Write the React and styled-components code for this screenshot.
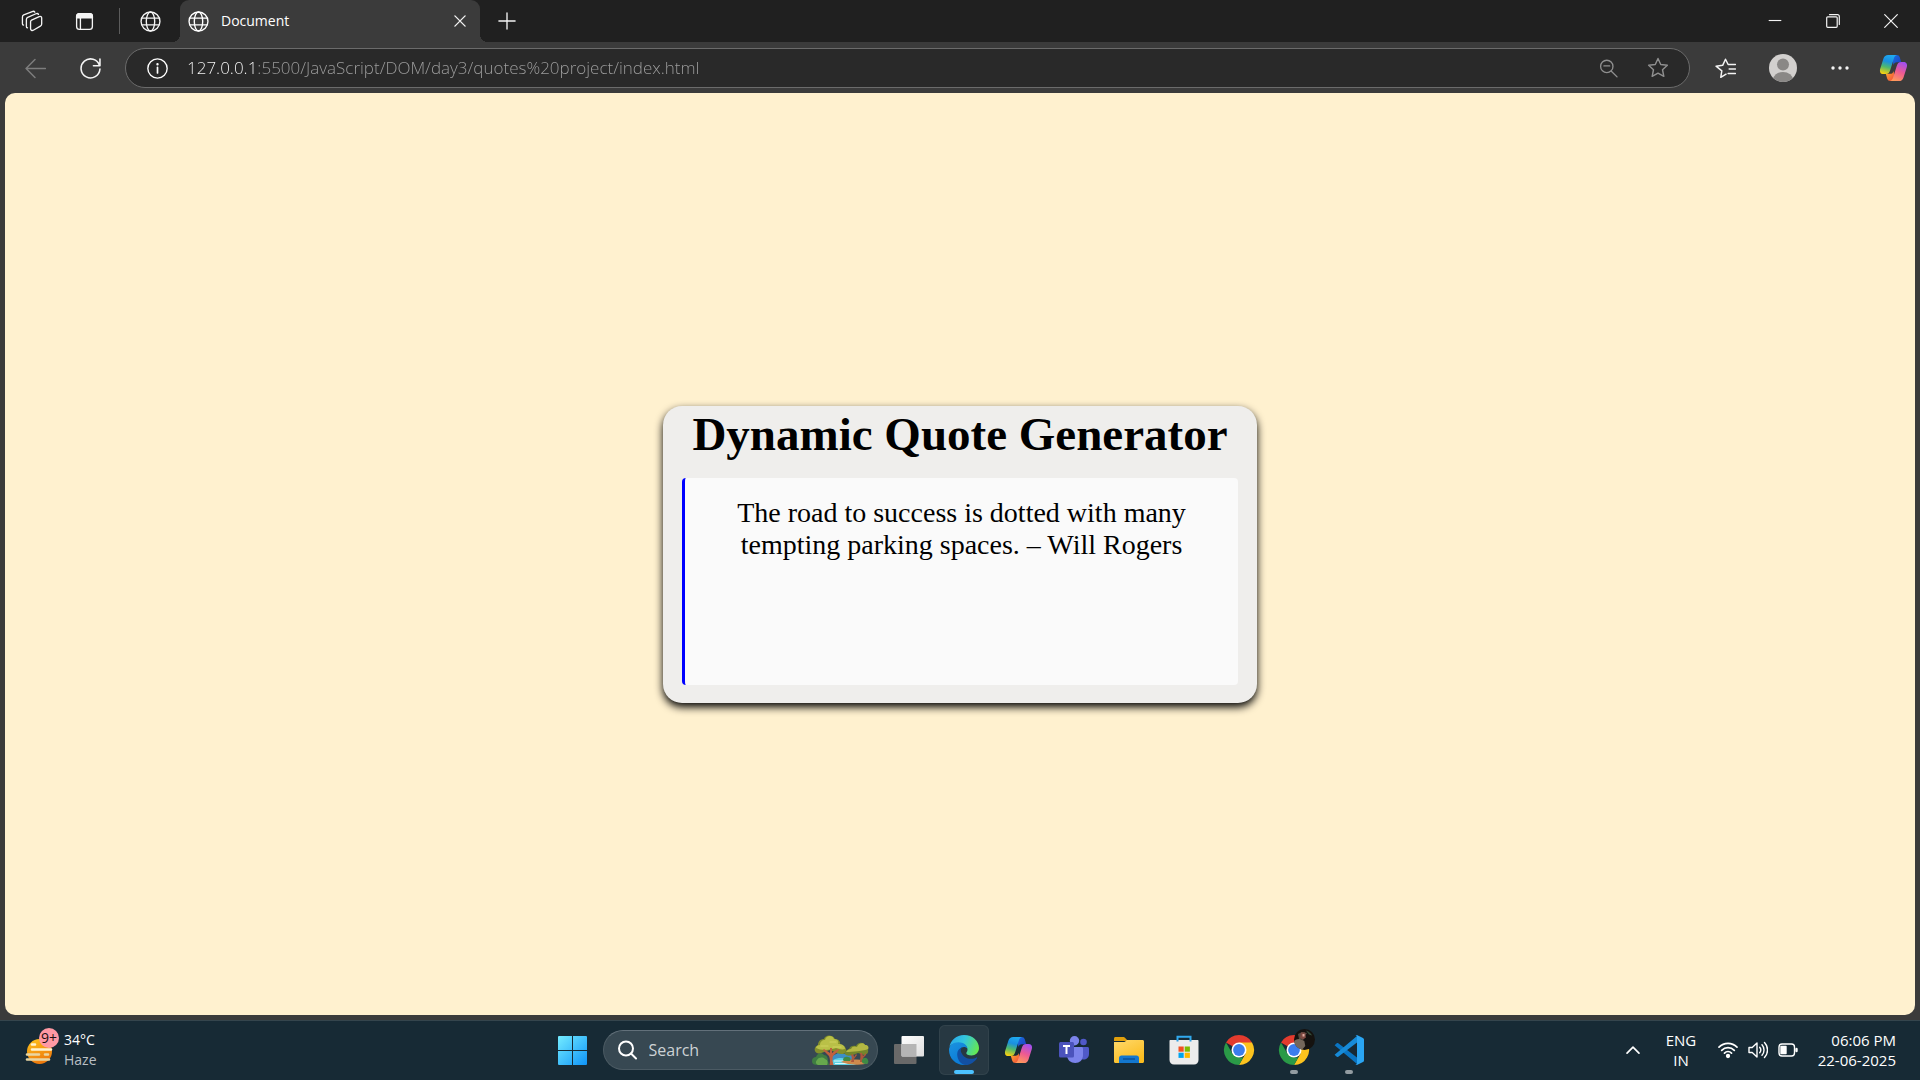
import React from "react";
import styled, { createGlobalStyle } from "styled-components";

const ui = `"Open Sans", "Noto Sans", sans-serif`;
const serif = `"Liberation Serif", "Times New Roman", serif`;

const GlobalStyle = createGlobalStyle`
  * { box-sizing: border-box; }
  body { margin: 0; background: #3b3b3b; }
  button, input { font: inherit; color: inherit; border: 0; background: none; padding: 0; margin: 0; outline: none; }
  svg { display: block; flex: none; }
`;

const Screen = styled.div`
  min-height: 100vh;
  display: flex;
  flex-direction: column;
  background: #3b3b3b;
  color: #fff;
  font-family: ${ui};
  font-size: 14px;
`;

const TabStrip = styled.header`
  display: flex;
  align-items: stretch;
  height: 42px;
  padding-left: 6px;
  background: #202020;
`;

const BarButton = styled.button`
  display: flex;
  align-items: center;
  justify-content: center;
  width: ${(p) => p.$width || 52}px;
  flex: none;
  color: ${(p) => p.$tone || "#f4f4f4"};
`;

const Divider = styled.span`
  width: 1px;
  height: 26px;
  margin: 8px 0 8px 9px;
  background: #5c5c5c;
`;

const Tab = styled.div`
  position: relative;
  display: flex;
  align-items: center;
  gap: 12px;
  width: 300px;
  padding-left: 8px;
  border-radius: 9px 9px 0 0;
  background: #3b3b3b;

  &::before,
  &::after {
    content: "";
    position: absolute;
    bottom: 0;
    width: 8px;
    height: 8px;
  }
  &::before {
    left: -8px;
    background: radial-gradient(circle at 0 0, transparent 8px, #3b3b3b 8px);
  }
  &::after {
    right: -8px;
    background: radial-gradient(circle at 100% 0, transparent 8px, #3b3b3b 8px);
  }
`;

const TabTitle = styled.span`
  flex: 1;
  line-height: 20px;
`;

const Spacer = styled.span`
  flex: 1;
`;

const Toolbar = styled.nav`
  display: flex;
  align-items: stretch;
  height: 51px;
  padding: 6px 2px 5px 8px;
`;

const AddressBar = styled.div`
  flex: 1;
  display: flex;
  align-items: center;
  margin: 0 7px;
  padding: 0 6px 0 21px;
  border: 1px solid #6b6b6b;
  border-radius: 20px;
  background: #292929;
`;

const AddressInput = styled.input`
  flex: 1;
  min-width: 0;
  height: 32px;
  margin-left: 19px;
  padding-bottom: 2px;
  font-size: 17px;
  font-weight: 350;
  background: linear-gradient(to right, #fff 67px, #a0a0a0 67px);
  background-clip: text;
  -webkit-background-clip: text;
  -webkit-text-fill-color: transparent;
`;

const Page = styled.main`
  flex: 1;
  display: flex;
  align-items: center;
  justify-content: center;
  margin: 0 5px;
  border-radius: 10px;
  background: #fff1cf;
  color: #000;
  font-family: ${serif};
`;

const Card = styled.section`
  width: 594px;
  padding: 0 19px 18px;
  border-radius: 19px;
  background: #efeeec;
  box-shadow: 0 4px 8px #000;
  text-align: center;
`;

const CardTitle = styled.h1`
  margin: 0 -19px 16px;
  font-size: 47px;
  line-height: 56px;
  font-weight: 700;
`;

const Quote = styled.blockquote`
  min-height: 207px;
  margin: 0;
  padding: 19px 40px;
  border-left: 3px solid #00f;
  border-radius: 4px;
  background: #fafafa;
  font-size: 28px;
  line-height: 32px;
`;

const Taskbar = styled.footer`
  display: grid;
  grid-template-columns: 1fr auto 1fr;
  height: 60px;
  margin-top: 5px;
  padding: 4px 0 5px;
  border-top: 1px solid #35454d;
  background: #172a35;
  font-size: 15px;
`;

const Weather = styled.button`
  display: flex;
  align-items: center;
  gap: 10px;
  justify-self: start;
  padding-left: 24px;
  font-size: 14px;
  text-align: left;
`;

const WeatherText = styled.span`
  display: flex;
  flex-direction: column;
  line-height: 20px;
`;

const Muted = styled.span`
  color: #b9bfc3;
`;

const Apps = styled.div`
  display: flex;
  gap: 5px;
  padding-left: 1px;
`;

const AppButton = styled.button`
  position: relative;
  display: flex;
  align-items: center;
  justify-content: center;
  width: 50px;
  height: 50px;
  border-radius: 6px;
  background: ${(p) => (p.$active ? "#273842" : "transparent")};
  box-shadow: ${(p) => (p.$active ? "inset 0 0 0 1px #31424b" : "none")};

  &::after {
    content: "";
    display: ${(p) => (p.$active || p.$open ? "block" : "none")};
    position: absolute;
    bottom: 1px;
    width: ${(p) => (p.$active ? 20 : 8)}px;
    height: 4px;
    border-radius: 2px;
    background: ${(p) => (p.$active ? "#4cc2ff" : "#939ca1")};
  }
`;

const SearchBox = styled.label`
  display: flex;
  align-items: center;
  gap: 12px;
  width: 275px;
  height: 40px;
  margin: 5px 1px 5px 0;
  padding: 0 8px 0 13px;
  border: 1px solid #4b5a63;
  border-top-color: #62707a;
  border-radius: 20px;
  background: #374852;
`;

const SearchInput = styled.input`
  flex: 1;
  min-width: 0;
  font-size: 16px;
  &::placeholder { color: #cdd2d5; opacity: 1; }
`;

const Tray = styled.div`
  display: flex;
  align-items: stretch;
  justify-content: flex-end;
  padding-right: 24px;
`;

const TrayButton = styled.button`
  display: flex;
  align-items: center;
  justify-content: center;
  gap: 10px;
  padding: 0 ${(p) => p.$pad || 9}px;
`;

const TrayText = styled.button`
  width: ${(p) => p.$width}px;
  line-height: 20px;
  text-align: ${(p) => p.$align};
`;

const Line = styled.span`
  display: block;
  white-space: nowrap;
`;

const Stroke = ({ size = 20, width = 1.4, children, ...rest }) => (
  <svg width={size} height={size} viewBox="0 0 20 20" fill="none" stroke="currentColor"
    strokeWidth={width} strokeLinecap="round" strokeLinejoin="round" aria-hidden="true" {...rest}>
    {children}
  </svg>
);

const Globe = () => (
  <Stroke size={21} width={1.3}>
    <circle cx="10" cy="10" r="9" />
    <ellipse cx="10" cy="10" rx="4" ry="9" />
    <path d="M1.8 6.8h16.4M1.8 13.2h16.4" />
  </Stroke>
);

const Workspaces = () => (
  <Stroke size={22} width={1.2}>
    <path d="M9.600 9.200 16.600 6c1.200-.5 2.200 0 2.200 1.300v5.500c0 .9-.4 1.500-1.200 1.900l-6.400 3.700c-1.100.6-2.500 0-2.500-1.300v-6.400c0-.7.300-1.200.9-1.500z" />
    <path d="M5.900 16.300c-.7-.2-1-.7-1-1.400V8.600c0-.9.4-1.500 1.200-1.900L13.600 3.400c1-.4 1.900-.2 2.300.6" />
    <path d="M2.300 13.800c-.7-.2-1-.7-1-1.400V6.400c0-.9.4-1.500 1.200-1.900L10.200 1.400c1-.4 1.900-.2 2.300.5" />
  </Stroke>
);

const TabActions = () => (
  <Stroke size={19}>
    <rect x="1.700" y="1.700" width="16.600" height="16.600" rx="3" />
    <path d="M1.700 6.200V4.500a2.800 2.800 0 0 1 2.800-2.800h11a2.800 2.800 0 0 1 2.800 2.800v1.700z" fill="currentColor" />
    <path d="M5.700 6.500v11.500" />
  </Stroke>
);

const CopilotMark = ({ id }) => (
  <svg width="29" height="26" viewBox="0 0 29 27" aria-hidden="true">
    <defs>
      <linearGradient id={`${id}a`} x1=".6" y1="0" x2=".35" y2="1">
        <stop offset="0" stopColor="#1faaf0" /><stop offset=".35" stopColor="#1a8fe0" />
        <stop offset=".65" stopColor="#4fb96c" /><stop offset="1" stopColor="#f4cf12" />
      </linearGradient>
      <linearGradient id={`${id}b`} x1=".7" y1="0" x2=".3" y2="1">
        <stop offset="0" stopColor="#a24ff0" /><stop offset=".5" stopColor="#ee5a92" />
        <stop offset="1" stopColor="#ff9a5a" />
      </linearGradient>
      <linearGradient id={`${id}c`} x1="0" y1="0" x2="1" y2="1">
        <stop offset="0" stopColor="#1c6fe0" /><stop offset="1" stopColor="#1b3fc0" />
      </linearGradient>
      <linearGradient id={`${id}d`} x1="0" y1="0" x2="1" y2="1">
        <stop offset="0" stopColor="#ffae2e" /><stop offset="1" stopColor="#f0453c" />
      </linearGradient>
    </defs>
    <path d="M13 0h4.500c2 0 3 .8 3.600 2.600L22.500 7.500H18c-2 0-3 1-3.600 3z" fill={`url(#${id}c)`} />
    <path d="M16 27h-4.500c-2 0-3-.8-3.600-2.600L6.500 19.500H11c2 0 3-1 3.600-3z" fill={`url(#${id}d)`} />
    <path d="M9 0h9c-1.700.5-2.600 1.800-3.200 3.800L11.300 15c-1 3.400-2 4.800-5 4.800H4C.8 19.800-.2 17.200.8 14L4 4C4.900 1.200 6.400 0 9 0z" fill={`url(#${id}a)`} />
    <path d="M20 27h-9c1.700-.5 2.600-1.800 3.200-3.800L17.700 12c1-3.400 2-4.800 5-4.800H25c3.200 0 4.200 2.600 3.200 5.800L25 23c-.9 2.800-2.400 4-5 4z" fill={`url(#${id}b)`} />
  </svg>
);

const HazeIcon = () => (
  <svg width="30" height="32" viewBox="0 0 30 32" aria-hidden="true">
    <defs>
      <linearGradient id="sun" x1="0" y1="0" x2=".4" y2="1">
        <stop offset="0" stopColor="#ffc61c" /><stop offset="1" stopColor="#ee7a0c" />
      </linearGradient>
    </defs>
    <circle cx="15.500" cy="17.500" r="12.500" fill="url(#sun)" />
    <g stroke="#fff3cf" strokeWidth="2.600" strokeLinecap="round">
      <path d="M8 10.500h3M8 15.500h13M22 15.500h5" />
      <path d="M3 20.500h12M21 20.500h3M3 25.500h22" stroke="#e9d6a2" />
    </g>
  </svg>
);

const WeatherIcon = styled.span`
  position: relative;
  display: block;
`;

const Badge = styled.span`
  position: absolute;
  left: 15px;
  top: -6px;
  width: 20px;
  height: 20px;
  border-radius: 50%;
  background: #ff99a4;
  color: #1c1012;
  font-size: 14px;
  line-height: 20px;
  text-align: center;
`;

const Windows = () => (
  <svg width="29" height="29" viewBox="0 0 29 29" aria-hidden="true">
    <defs>
      <linearGradient id="win" gradientUnits="userSpaceOnUse" x1="0" y1="0" x2="29" y2="29">
        <stop offset="0" stopColor="#74ecff" /><stop offset="1" stopColor="#0f94f8" />
      </linearGradient>
    </defs>
    <path d="M0 1a1 1 0 0 1 1-1h13v14H0zM15 0h13a1 1 0 0 1 1 1v13H15zM0 15h14v14H1a1 1 0 0 1-1-1zM15 15h14v13a1 1 0 0 1-1 1H15z" fill="url(#win)" />
  </svg>
);

const Grove = () => (
  <svg width="57" height="32" viewBox="0 0 57 32" aria-hidden="true">
    <path d="M20 22l6-3 6 1 4-2 6 4-4 6H20z" fill="#3d8fc4" />
    <path d="M0 27c0-3 2-4 4-4 1-4 6-5 8-2 3 0 4 3 4 6l1 4H6c-4 0-6-1-6-4z" fill="#3f7d42" />
    <path d="M5 26c2-3 6-3 8-1 3 1 3 4 2 6H6c-2-1-3-3-1-5z" fill="#67a84d" />
    <path d="M19 31c0-5 4-7 10-7l9 1-6 2 13 4z" fill="#5fd3e6" />
    <path d="M22 27h11M23 29.500h14" stroke="#d8f8fb" strokeWidth="1.200" />
    <path d="M29 28c6-3 14-3 27-1v2c-4 2-12 2-20 1z" fill="#cf8a4c" />
    <path d="M3 17c-1-3 1-5 3-6 0-4 3-6 6-6 1-4 8-5 11 0 4 0 6 3 5 6 5 0 7 4 6 7-2 3-6 2-9 1l-7-3-6 2c-4 2-8 2-9-1z" fill="#848f2b" />
    <path d="M4 14c0-2 2-3 4-3 0-3 2-5 5-5 1-5 8-5 9-1 4 0 5 3 4 5 5 0 7 2 7 5-3 1-6 0-9-1-5 2-15 3-20 0z" fill="#b9c047" />
    <path d="M9 12h7M18 8h6M21 13h8" stroke="#d0d25e" strokeWidth="1.200" strokeLinecap="round" />
    <path d="M17.500 31c.8-4 .6-6-.5-9l-6-6 1-1 6 4v-5h2v5l6-4 1 1-6 6c-1 3-.6 5 .6 9z" fill="#c0603f" />
    <path d="M33 20c-1-3 2-4 4-5 1-3 4-4 7-3 2-4 7-4 9-1 3 0 4 3 3 5 1 3-2 5-4 5l-6-2-5 2c-4 1-7 1-8-1z" fill="#74862b" />
    <path d="M34 18c1-2 3-3 5-3 1-3 4-3 6-2 1-4 7-5 8-2 3 0 4 2 3 4-4 2-16 3-22 3z" fill="#b4b843" />
    <path d="M39 28c1-3 1-5 0-7l2-1 1 3 2-3 1 1-3 4v3zM48 28c0-4 1-6 0-9h2l1 3 3-3v2l-3 3v4z" fill="#ad573b" />
    <path d="M31 26c0-3 3-4 5-3 3 0 3 3 2 4h-6zM50 26c1-3 5-3 6 0 1 2 0 4-2 4s-5-1-4-4z" fill="#3f8a45" />
  </svg>
);

const TaskView = () => (
  <svg width="30" height="30" viewBox="0 0 30 30" aria-hidden="true">
    <defs>
      <linearGradient id="tv" x1="0" y1="0" x2="1" y2="1">
        <stop offset="0" stopColor="#fff" /><stop offset="1" stopColor="#dedede" />
      </linearGradient>
    </defs>
    <rect x="0" y="9" width="22.500" height="20" rx="1" fill="#696969" />
    <rect x="7.500" y="1" width="22.500" height="20.500" rx="1" fill="url(#tv)" />
    <path d="M7.500 9h15v12.500h-14a1 1 0 0 1-1-1z" fill="#b5b5b5" />
  </svg>
);

const Edge = () => (
  <svg width="30" height="30" viewBox="0 0 30 30" aria-hidden="true">
    <defs>
      <linearGradient id="e1" x1="0" y1=".3" x2="1" y2=".6">
        <stop offset="0" stopColor="#27a8ec" /><stop offset=".45" stopColor="#34c6dc" /><stop offset="1" stopColor="#66e94f" />
      </linearGradient>
      <linearGradient id="e2" x1="0" y1="0" x2=".6" y2="1">
        <stop offset="0" stopColor="#1b93e0" /><stop offset="1" stopColor="#0a7ad6" />
      </linearGradient>
    </defs>
    <path d="M.4 12C1.600 5 7.400 0 15 0c9 0 15 6.400 15 13 0 4.600-3.500 7.400-7.400 7.400-3.600 0-5.300-1.200-5.300-2.200 0-.8 1.200-1.300 1.200-3.600C18.500 11 14.500 8 9.500 8 5 8 1.500 10 .4 12z" fill="url(#e1)" />
    <path d="M0 15c0-4.500 4-7.800 9.500-7.800 5 0 8.500 2.800 9 6.300-1-1-2.200-1.500-3.500-1.500-3.500 0-5.500 3-5.500 6.500 0 5 3.500 9.500 9 10.800-1.100.5-2.300.7-3.500.7C6.700 30 0 23.300 0 15z" fill="url(#e2)" />
    <path d="M13.500 12.200c-1.700 1.200-2.300 3-1 5.800 1.700 3.700 5.300 5.800 9.300 5.800 2.600 0 4.400-.8 5.600-1.400.6-.3 1 .2.600.8C26 26.500 21.500 30 16.800 30 12 29.500 8.200 25 8.200 19.200c0-3.500 2-6.200 5.300-7z" fill="#1250a3" />
  </svg>
);

const Teams = () => (
  <svg width="30" height="28" viewBox="0 0 30 28" aria-hidden="true">
    <circle cx="24.500" cy="6" r="3.300" fill="#5059c9" />
    <path d="M20 11h8.500c.9 0 1.500.6 1.500 1.500V18c0 3.500-2.500 5.500-5.500 5.500S20 21 20 18z" fill="#5059c9" />
    <circle cx="15.500" cy="4.800" r="4.700" fill="#7b83eb" />
    <path d="M9 11h13.500c.9 0 1.500.6 1.500 1.500V19c0 5-3.400 8-7.800 8S8 24 8 19z" fill="#7b83eb" />
    <rect x="0" y="6" width="15" height="15.500" rx="1.500" fill="#4b53bc" />
    <path d="M4 10h7M7.500 10v8" stroke="#fff" strokeWidth="2" fill="none" />
  </svg>
);

const Explorer = () => (
  <svg width="30" height="26" viewBox="0 0 30 26" aria-hidden="true">
    <defs>
      <linearGradient id="fo" x1="0" y1="0" x2=".6" y2="1">
        <stop offset="0" stopColor="#ffd96b" /><stop offset="1" stopColor="#fbbc1f" />
      </linearGradient>
    </defs>
    <path d="M0 1.500C0 .6.600 0 1.500 0H9c1 0 1.500.3 2.200 1L14 4H0z" fill="#e09f0c" />
    <path d="M0 5h9.500c1 0 1.600-.3 2.300-1L13 3h15.500c.9 0 1.500.6 1.500 1.500v20c0 .9-.6 1.500-1.500 1.500h-27C.6 26 0 25.400 0 24.500z" fill="url(#fo)" />
    <path d="M5 26v-5c0-1.500 1-2.500 2.500-2.500h15c1.500 0 2.500 1 2.500 2.500v5z" fill="#1377cf" />
    <path d="M9 22h12" stroke="#0a519b" strokeWidth="1.500" />
  </svg>
);

const Store = () => (
  <svg width="30" height="30" viewBox="0 0 30 30" aria-hidden="true">
    <path d="M8.500 6V1.800h13V6" fill="none" stroke="#31a9ee" strokeWidth="2" />
    <path d="M.5 6c0-.6.4-1 1-1h27c.6 0 1 .4 1 1v19c0 2.700-1.800 4.500-4.500 4.500H5C2.300 29.500.5 27.700.5 25z" fill="#ececec" />
    <path d="M7.500 5h2v1.500h-2zM20.500 5h2v1.500h-2z" fill="#2c9fe4" />
    <path d="M9.500 11.500h5.200v5.200H9.500z" fill="#f25022" /><path d="M15.700 11.500h5.200v5.200h-5.200z" fill="#7fba00" />
    <path d="M9.500 17.700h5.200v5.200H9.500z" fill="#00a4ef" /><path d="M15.700 17.700h5.200v5.200h-5.200z" fill="#ffb900" />
  </svg>
);

const Chrome = ({ profile }) => (
  <svg width="30" height="30" viewBox="0 0 30 30" overflow="visible" aria-hidden="true">
    <path d="M15 15 2 7.500A15 15 0 0 1 28 7.500z" fill="#e33b2e" />
    <path d="M15 7.500h13A15 15 0 0 1 15 30l6.500-11.300z" fill="#fcc31e" />
    <path d="M2 7.500 8.500 18.700 15 22.500h4.300L15 30A15 15 0 0 1 2 7.500z" fill="#2a9a47" />
    <circle cx="15" cy="15" r="7.500" fill="#fff" />
    <circle cx="15" cy="15" r="5.900" fill="#3b7ded" />
    {profile && (
      <g>
        <circle cx="25.500" cy="4.500" r="10.500" fill="#15120f" />
        <path d="M15.300 6c2-2 4-2 6-2l4 2 1 5-3 3.600c-4-.6-8-4-8-8.600z" fill="#74675a" />
        <path d="M19-1l4-2 5 1-2 3-2 4-4-1z" fill="#544a40" />
        <path d="M22-2.500h4l1 5-3 2-3-2z" fill="#7d4a40" />
        <path d="M23.500-1h2v2.500h-2z" fill="#dfaaa0" />
        <path d="M27-4.500c3 1 5 3 6 5l-3-1z" fill="#36503c" />
      </g>
    )}
  </svg>
);

const VsCode = () => (
  <svg width="30" height="30" viewBox="0 0 30 30" aria-hidden="true">
    <path d="M.6 10.300 2.500 8.400c.5-.5 1.200-.5 1.800-.1L23 22.500V29z" fill="#0a75c3" />
    <path d="M.6 19.700l1.900 1.900c.5.500 1.200.5 1.800.1L23 7.500V1z" fill="#178bd8" />
    <path d="M22 .3c.4-.3.9-.3 1.400-.1l5.600 2.700c.6.300 1 .9 1 1.600v21c0 .7-.4 1.300-1 1.600l-5.600 2.700c-.8.400-1.700.2-2.300-.5.800.6 1.900 0 1.900-1V1.700c0-.9-1-1.600-1.900-1z" fill="#2aa5f3" />
  </svg>
);

const STAR = "M10 1.300l2.500 5.500 6 .7-4.400 4.100 1.200 6L10 14.700l-5.300 2.900 1.200-6L1.500 7.500l6-.7z";

export default function App() {
  return (
    <Screen>
      <GlobalStyle />
      <TabStrip>
        <BarButton aria-label="Workspaces"><Workspaces /></BarButton>
        <BarButton aria-label="Tab actions"><TabActions /></BarButton>
        <Divider />
        <BarButton $width={60} aria-label="Background tab"><Globe /></BarButton>
        <Tab>
          <Globe />
          <TabTitle>Document</TabTitle>
          <BarButton $width={40} aria-label="Close tab">
            <Stroke size={12} width={2.200}><path d="M1.500 1.500l17 17M18.500 1.500l-17 17" /></Stroke>
          </BarButton>
        </Tab>
        <BarButton $width={54} aria-label="New tab">
          <Stroke size={18} width={1.500}><path d="M10 1v18M1 10h18" /></Stroke>
        </BarButton>
        <Spacer />
        <BarButton $width={58} aria-label="Minimize">
          <Stroke size={14} width={1.600} strokeLinecap="butt"><path d="M1 9.300h18" /></Stroke>
        </BarButton>
        <BarButton $width={58} aria-label="Restore">
          <Stroke size={14} width={1.700}>
            <rect x="1" y="4" width="15" height="15" rx="1.500" />
            <path d="M5 1h11.500A2.500 2.500 0 0 1 19 3.500V15" />
          </Stroke>
        </BarButton>
        <BarButton $width={58} aria-label="Close window">
          <Stroke size={14} width={1.700}><path d="M1 1l18 18M19 1L1 19" /></Stroke>
        </BarButton>
      </TabStrip>

      <Toolbar>
        <BarButton $width={54} $tone="#7d7d7d" aria-label="Back">
          <Stroke size={21}><path d="M9.500 1.500 1 10l8.500 8.500M1 10h18.500" /></Stroke>
        </BarButton>
        <BarButton $width={56} aria-label="Refresh">
          <Stroke size={21} width={1.500}><path d="M18.600 7.200A9 9 0 1 0 19 10.500M19 1v6.300h-6.200" /></Stroke>
        </BarButton>
        <AddressBar>
          <Stroke size={21} width={1.300}>
            <circle cx="10" cy="10" r="9.200" />
            <path d="M10 9v5.200" strokeWidth="1.600" /><circle cx="10" cy="6" r=".5" fill="currentColor" />
          </Stroke>
          <AddressInput aria-label="Address" defaultValue="127.0.0.1:5500/JavaScript/DOM/day3/quotes%20project/index.html" />
          <BarButton $width={50} $tone="#8f8f8f" aria-label="Zoom">
            <Stroke size={19}><circle cx="8.200" cy="7.800" r="6.500" /><path d="M5.200 7.300h6M13 12.800l6 6" /></Stroke>
          </BarButton>
          <BarButton $width={50} $tone="#8f8f8f" aria-label="Add to favorites">
            <Stroke size={22} width={1.300}><path d={STAR} /></Stroke>
          </BarButton>
        </AddressBar>
        <BarButton $width={57} aria-label="Favorites">
          <Stroke size={21}>
            <path d="M10.500 15.400l-5 3 1-6.200L1 7.800l6.300-.8L10 1.200l2.500 5h7M13.500 10.500h6M12.500 14.800h7" />
          </Stroke>
        </BarButton>
        <BarButton $width={57} aria-label="Profile">
          <svg width="28" height="28" viewBox="0 0 28 28" aria-hidden="true">
            <clipPath id="avatar"><circle cx="14" cy="14" r="14" /></clipPath>
            <g clipPath="url(#avatar)">
              <path d="M0 0h28v28H0z" fill="#d2d0ce" />
              <circle cx="14" cy="10.500" r="6" fill="#8a8886" />
              <ellipse cx="14" cy="26" rx="10" ry="8" fill="#8a8886" />
            </g>
          </svg>
        </BarButton>
        <BarButton $width={57} aria-label="Settings and more">
          <svg width="18" height="4" viewBox="0 0 18 4" fill="currentColor" aria-hidden="true">
            <circle cx="2" cy="2" r="1.700" /><circle cx="9" cy="2" r="1.700" /><circle cx="16" cy="2" r="1.700" />
          </svg>
        </BarButton>
        <BarButton $width={50} aria-label="Copilot"><CopilotMark id="side" /></BarButton>
      </Toolbar>

      <Page>
        <Card>
          <CardTitle>Dynamic Quote Generator</CardTitle>
          <Quote>The road to success is dotted with many tempting parking spaces. – Will Rogers</Quote>
        </Card>
      </Page>

      <Taskbar>
        <Weather>
          <WeatherIcon><HazeIcon /><Badge>9+</Badge></WeatherIcon>
          <WeatherText><span>34°C</span><Muted>Haze</Muted></WeatherText>
        </Weather>
        <Apps>
          <AppButton aria-label="Start"><Windows /></AppButton>
          <SearchBox>
            <Stroke size={20} width={2}><circle cx="9" cy="8.500" r="7" /><path d="M14 13.500l5 5" /></Stroke>
            <SearchInput placeholder="Search" aria-label="Search" />
            <Grove />
          </SearchBox>
          <AppButton aria-label="Task view"><TaskView /></AppButton>
          <AppButton $active aria-label="Edge"><Edge /></AppButton>
          <AppButton aria-label="Copilot"><CopilotMark id="task" /></AppButton>
          <AppButton aria-label="Teams"><Teams /></AppButton>
          <AppButton aria-label="File Explorer"><Explorer /></AppButton>
          <AppButton aria-label="Store"><Store /></AppButton>
          <AppButton aria-label="Chrome"><Chrome /></AppButton>
          <AppButton $open aria-label="Chrome profile"><Chrome profile /></AppButton>
          <AppButton $open aria-label="Visual Studio Code"><VsCode /></AppButton>
        </Apps>
        <Tray>
          <TrayButton $pad={13} aria-label="Hidden icons">
            <Stroke size={14} width={2.400}><path d="M1.500 14.500 10 6l8.500 8.500" /></Stroke>
          </TrayButton>
          <TrayText $width={56} $align="center"><Line>ENG</Line><Line>IN</Line></TrayText>
          <TrayButton aria-label="Network, volume and battery">
            <Stroke width={1.700}>
              <path d="M1 7.200c5-5 13-5 18 0M3.700 10.300c3.500-3.500 9.100-3.500 12.600 0M6.500 13.200c2-2 5-2 7 0" />
              <circle cx="10" cy="16" r="1.300" fill="currentColor" />
            </Stroke>
            <Stroke>
              <path d="M1 7.500h3.200L9 3v14l-4.800-4.500H1zM11.700 7.200c1.300 1.600 1.300 4 0 5.600M14 4.800c2.700 3 2.700 7.400 0 10.400M16.500 2.500c4 4.300 4 10.700 0 15" />
            </Stroke>
            <Stroke>
              <rect x="1" y="4" width="15.500" height="12" rx="3" />
              <path d="M3 6.500h5v7H3z" fill="currentColor" />
              <path d="M18.500 9v2" strokeWidth="2.400" />
            </Stroke>
          </TrayButton>
          <TrayText $width={89} $align="right"><Line>06:06 PM</Line><Line>22-06-2025</Line></TrayText>
        </Tray>
      </Taskbar>
    </Screen>
  );
}
